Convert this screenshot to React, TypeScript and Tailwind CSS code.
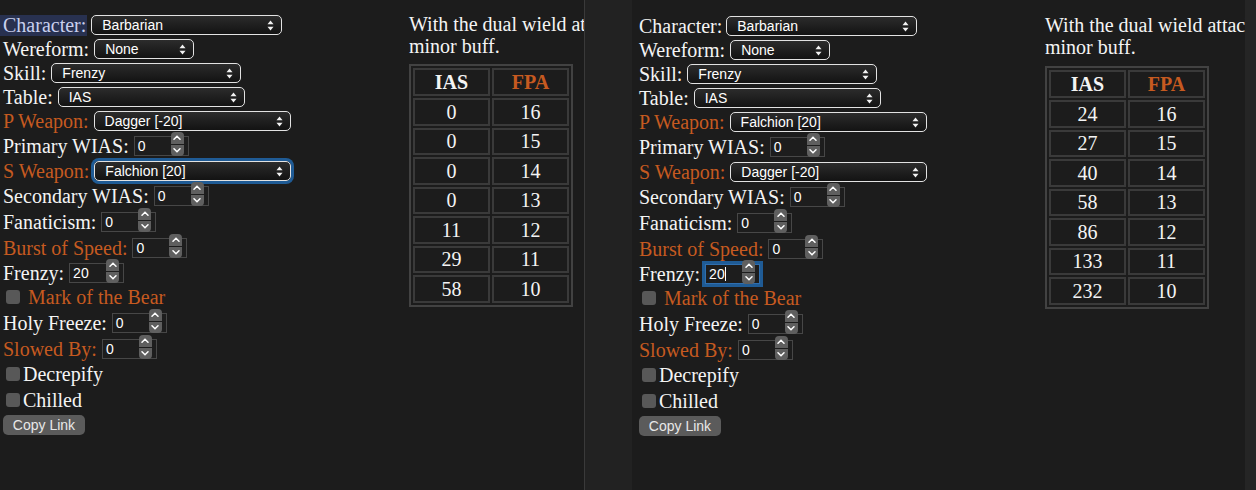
import React from "react";

const SERIF = "font-['Liberation_Serif','Times_New_Roman',serif]";
const SANS = "font-['Liberation_Sans',Arial,sans-serif]";
const ORANGE = "text-[#c65a20]";
const WHITE = "text-[#f4f4f4]";

function Arrows() {
  return (
    <svg width="7" height="11" viewBox="0 0 7 11" className="shrink-0">
      <path d="M3.5 0.5 L6.5 4.2 H0.5 Z" fill="#f2f2f2" />
      <path d="M0.5 6.8 H6.5 L3.5 10.5 Z" fill="#f2f2f2" />
    </svg>
  );
}

function Select({ value, w, focused }: { value: string; w: string; focused?: boolean }) {
  return (
    <div
      className={`${w} h-[20px] shrink-0 rounded-[5px] border border-[#e2e2e2] bg-linear-to-b from-[#2c2c2c] to-[#131313] flex items-center justify-between pl-[10px] pr-[7px] ${SANS} text-[14px] text-white ${
        focused ? "ring-[3px] ring-[#1f5b95]" : ""
      }`}
    >
      <span className="leading-none">{value}</span>
      <Arrows />
    </div>
  );
}

function Spinner() {
  return (
    <div className="absolute left-[36px] top-[-5px] w-[13px] h-[24px] flex flex-col gap-px">
      <div className="flex-1 rounded-t-[4px] bg-[#5f5f5f] flex items-center justify-center">
        <svg width="8" height="5" viewBox="0 0 8 5">
          <path d="M1 4.2 L4 1.2 L7 4.2" stroke="#ffffff" strokeWidth="1.5" fill="none" strokeLinecap="round" />
        </svg>
      </div>
      <div className="flex-1 rounded-b-[4px] bg-[#5f5f5f] flex items-center justify-center">
        <svg width="8" height="5" viewBox="0 0 8 5">
          <path d="M1 0.8 L4 3.8 L7 0.8" stroke="#ffffff" strokeWidth="1.5" fill="none" strokeLinecap="round" />
        </svg>
      </div>
    </div>
  );
}

function Num({ value, focused }: { value: string; focused?: boolean }) {
  return (
    <div
      className={`relative shrink-0 w-[55px] h-[20px] border ${
        focused ? "border-[#2f6fb0] ring-[3px] ring-[#1f5b95]" : "border-[#474747]"
      } bg-[#1d1d1d] flex items-center pl-[3px] ${SANS} text-[14px] text-white`}
    >
      <span className="leading-none">{value}</span>
      {focused && <span className="w-px h-[14px] bg-white" />}
      <Spinner />
    </div>
  );
}

function Box() {
  return <span className="shrink-0 ml-[3px] mr-[3px] w-[14px] h-[14px] rounded-[3px] bg-[#585858]" />;
}

type PanelProps = {
  pWeapon: string;
  sWeapon: string;
  focus: "sweapon" | "frenzy";
  highlight?: boolean;
  ias: string[];
  padClass: string;
  tableTop: string;
};

const FPA = ["16", "15", "14", "13", "12", "11", "10"];

function Panel({ pWeapon, sWeapon, focus, highlight, ias, padClass, tableTop }: PanelProps) {
  return (
    <div className={`flex ${padClass} ${SERIF} text-[20px] ${WHITE}`}>
      <div className="w-[406px] shrink-0 flex flex-col">
        <div className="flex items-center gap-[4px] h-[24px]">
          {highlight ? (
            <span className="-ml-[3px] pl-[3px] pr-[1px] bg-[#283150] text-[#c9d0ee] leading-[21px]">Character:</span>
          ) : (
            <span>Character:</span>
          )}
          <Select value="Barbarian" w="w-[191px]" />
        </div>
        <div className="flex items-center gap-[5px] h-[24px]">
          <span>Wereform:</span>
          <Select value="None" w="w-[100px]" />
        </div>
        <div className="flex items-center gap-[5px] h-[24px]">
          <span>Skill:</span>
          <Select value="Frenzy" w="w-[190px]" />
        </div>
        <div className="flex items-center gap-[5px] h-[24px]">
          <span>Table:</span>
          <Select value="IAS" w="w-[187px]" />
        </div>
        <div className="flex items-center gap-[5px] h-[24px]">
          <span className={ORANGE}>P Weapon:</span>
          <Select value={pWeapon} w="w-[197px]" />
        </div>
        <div className="flex items-center gap-[5px] h-[26px]">
          <span>Primary WIAS:</span>
          <Num value="0" />
        </div>
        <div className="flex items-center gap-[5px] h-[24px]">
          <span className={ORANGE}>S Weapon:</span>
          <Select value={sWeapon} w="w-[197px]" focused={focus === "sweapon"} />
        </div>
        <div className="flex items-center gap-[5px] h-[26px]">
          <span>Secondary WIAS:</span>
          <Num value="0" />
        </div>
        <div className="flex items-center gap-[5px] h-[26px]">
          <span>Fanaticism:</span>
          <Num value="0" />
        </div>
        <div className="flex items-center gap-[5px] h-[26px]">
          <span className={ORANGE}>Burst of Speed:</span>
          <Num value="0" />
        </div>
        <div className="flex items-center gap-[5px] h-[24px]">
          <span>Frenzy:</span>
          <Num value="20" focused={focus === "frenzy"} />
        </div>
        <div className="flex items-center h-[24px]">
          <Box />
          <span className={`ml-[5px] ${ORANGE}`}>Mark of the Bear</span>
        </div>
        <div className="flex items-center gap-[5px] h-[28px]">
          <span>Holy Freeze:</span>
          <Num value="0" />
        </div>
        <div className="flex items-center gap-[5px] h-[24px]">
          <span className={ORANGE}>Slowed By:</span>
          <Num value="0" />
        </div>
        <div className="flex items-center h-[26px]">
          <Box />
          <span>Decrepify</span>
        </div>
        <div className="flex items-center h-[26px]">
          <Box />
          <span>Chilled</span>
        </div>
        <div className="flex items-center h-[24px]">
          <button
            className={`w-[82px] h-[20px] rounded-[5px] bg-[#5b5b5b] ${SANS} text-[14px] text-[#e8e8e8] flex items-center justify-center leading-none`}
          >
            Copy Link
          </button>
        </div>
      </div>
      <div className="shrink-0 flex flex-col items-start">
        <p className="whitespace-nowrap leading-[22px]">
          With the dual wield attack speed formula, Fanaticism is only a
          <br />
          minor buff.
        </p>
        <table className={`${tableTop} self-start border-separate border-spacing-[2px] border-2 border-[#424242]`}>
          <tbody>
            <tr>
              <td className="w-[77px] min-w-[77px] max-w-[77px] h-[28px] p-0 border-2 border-[#3a3a3a] text-center font-bold leading-none">IAS</td>
              <td className={`w-[77px] min-w-[77px] max-w-[77px] h-[28px] p-0 border-2 border-[#3a3a3a] text-center font-bold leading-none ${ORANGE}`}>FPA</td>
            </tr>
            {ias.map((v, i) => (
              <tr key={i}>
                <td className="w-[77px] h-[27.5px] p-0 border-2 border-[#3a3a3a] text-center leading-none">{v}</td>
                <td className="w-[77px] h-[27.5px] p-0 border-2 border-[#3a3a3a] text-center leading-none">{FPA[i]}</td>
              </tr>
            ))}
          </tbody>
        </table>
      </div>
    </div>
  );
}

export default function App() {
  return (
    <div className="w-[1256px] h-[490px] overflow-hidden flex bg-[#1c1c1c]">
      <div className="w-[584px] h-full shrink-0 overflow-hidden bg-[#1c1c1c]">
        <Panel
          pWeapon="Dagger [-20]"
          sWeapon="Falchion [20]"
          focus="sweapon"
          highlight
          ias={["0", "0", "0", "0", "11", "29", "58"]}
          padClass="pl-[3px] pt-[13px]"
          tableTop="mt-[7px]"
        />
      </div>
      <div className="w-px h-full shrink-0 bg-[#3a3a3a]" />
      <div className="w-[47px] h-full shrink-0 bg-[#222222]" />
      <div className="w-[613px] h-full shrink-0 overflow-hidden bg-[#1c1c1c]">
        <Panel
          pWeapon="Falchion [20]"
          sWeapon="Dagger [-20]"
          focus="frenzy"
          ias={["24", "27", "40", "58", "86", "133", "232"]}
          padClass="pl-[7px] pt-[14px]"
          tableTop="mt-[8px]"
        />
      </div>
      <div className="flex-1 h-full bg-[#252525]" />
    </div>
  );
}
